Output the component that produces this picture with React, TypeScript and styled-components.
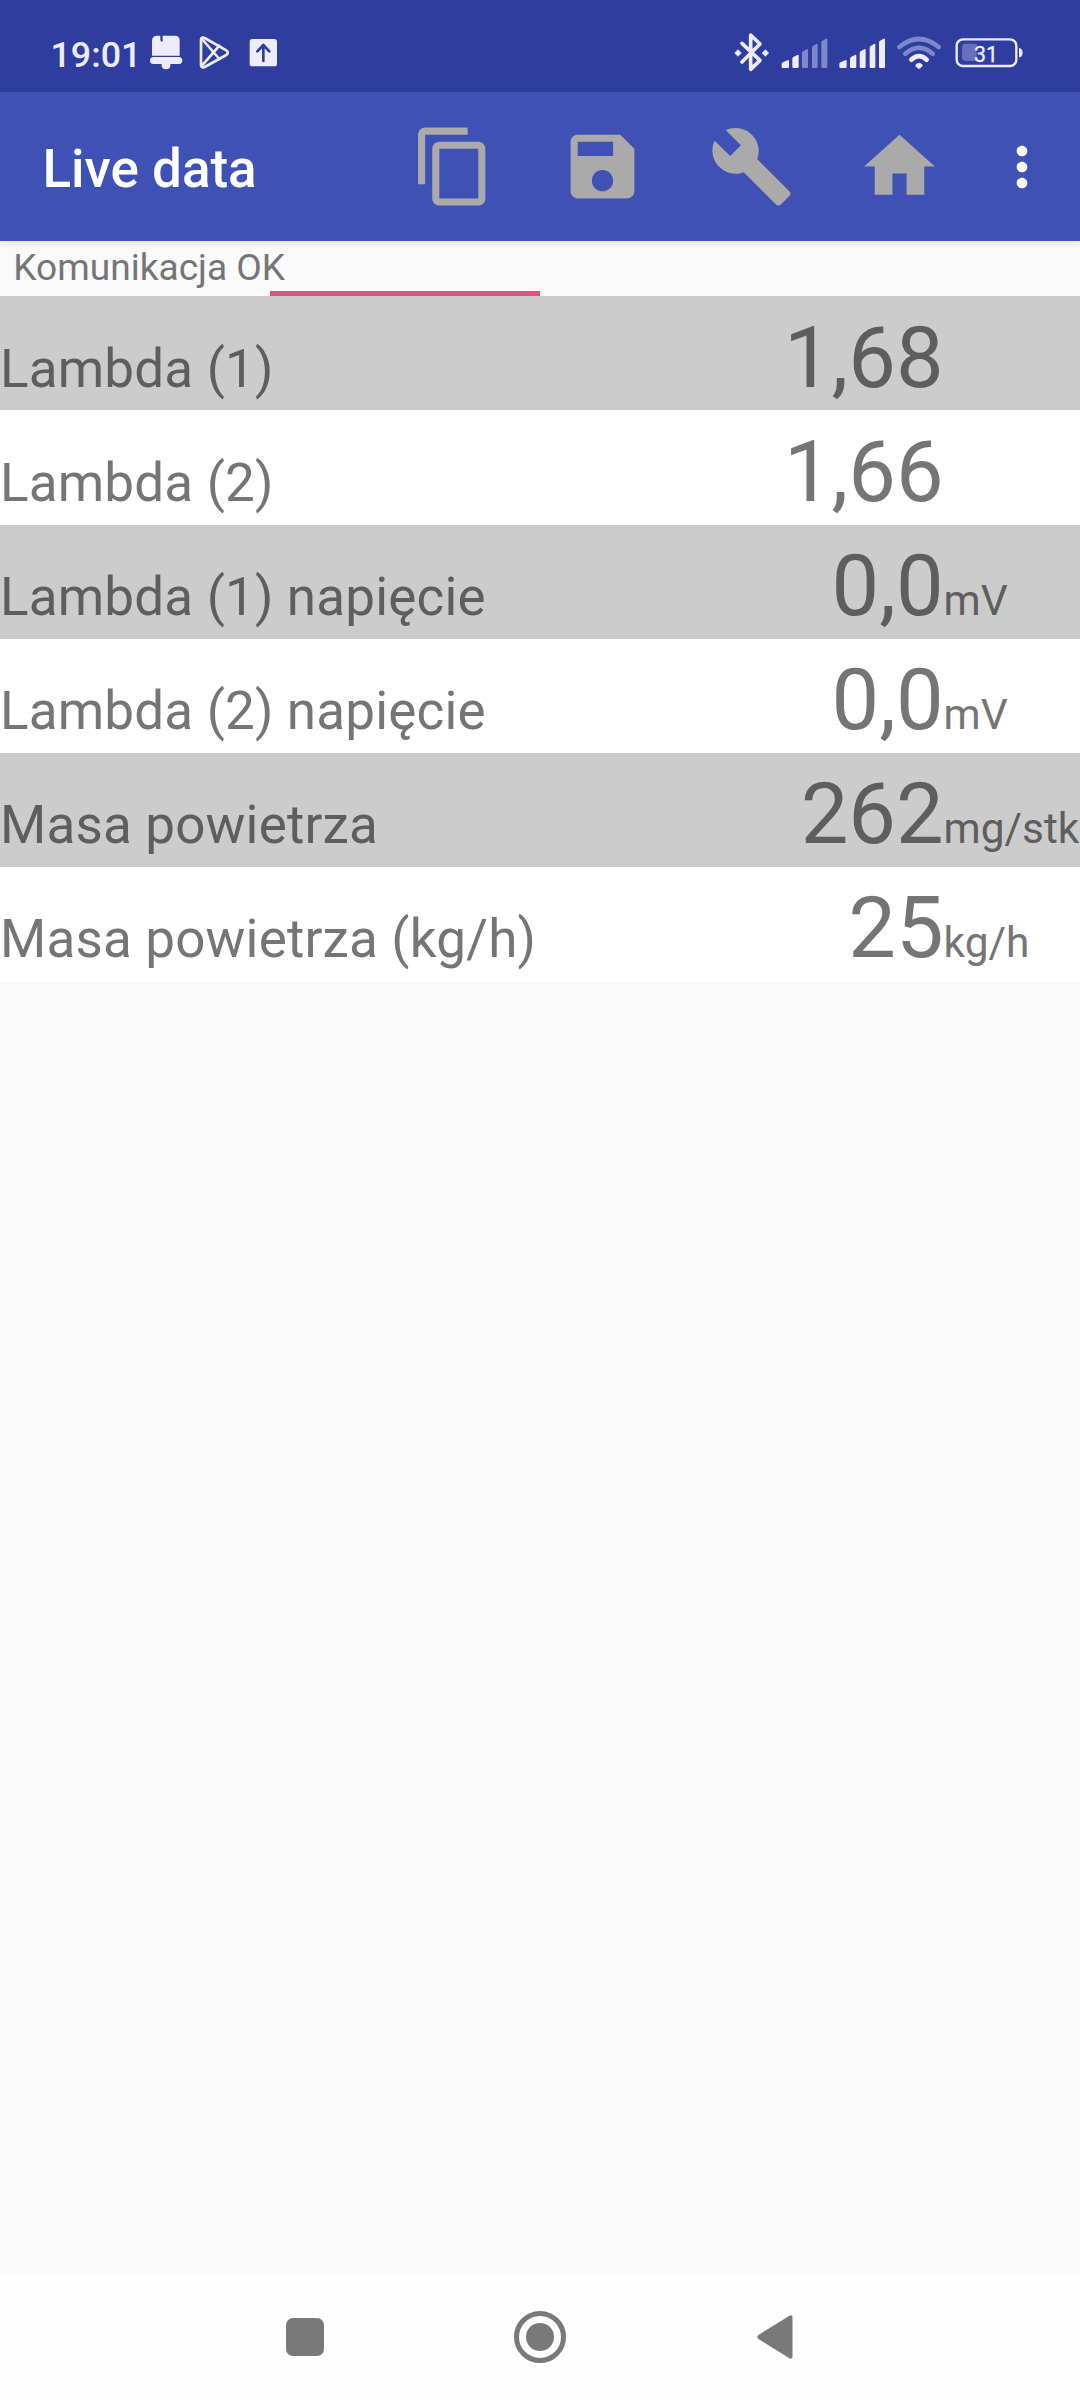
import React from "react";
import styled, { createGlobalStyle } from "styled-components";

const GlobalStyle = createGlobalStyle`
  *, *::before, *::after { box-sizing: border-box; }
  html, body { margin: 0; padding: 0; }
  body { background: #fafafa; font-family: Roboto, "Noto Sans", sans-serif; }
  svg { display: block; flex: none; }
`;

const Screen = styled.div`
  display: flex;
  flex-direction: column;
  width: 1080px;
  height: 2400px;
  overflow: hidden;
  background: #fafafa;
`;

const StatusBar = styled.header`
  display: flex;
  align-items: flex-start;
  justify-content: space-between;
  height: 92px;
  padding: 20px 57px 0 50px;
  background: #2f3d9e;
`;

const StatusGroup = styled.div`
  display: flex;
  align-items: flex-start;
  height: 70px;
`;

const Clock = styled.span`
  width: 100px;
  padding-left: 0.5px;
  font-size: 35.8px;
  font-weight: 500;
  line-height: 70px;
  color: #ececfb;
`;

const AppBar = styled.div`
  position: relative;
  z-index: 1;
  display: flex;
  align-items: center;
  height: 149px;
  padding: 0 11px 0 42.4px;
  background: #3f51b5;
  box-shadow: 0 2px 8px rgba(0, 0, 0, 0.12);
`;

const Title = styled.h1`
  flex: 1;
  margin: 0;
  padding-top: 4px;
  font-size: 53px;
  font-weight: 500;
  line-height: 62px;
  color: #fff;
`;

const ActionButton = styled.button<{ $width: number }>`
  display: flex;
  align-items: center;
  justify-content: center;
  width: ${(p) => p.$width}px;
  height: 149px;
  padding: 0;
  border: 0;
  background: none;
`;

const ConnectionStrip = styled.div`
  display: flex;
  flex-direction: column;
  height: 55.2px;
`;

const ConnectionText = styled.div`
  height: 50px;
  padding: 4px 0 0 13.3px;
  font-size: 37.1px;
  line-height: 46px;
  color: #757575;
`;

const Progress = styled.div`
  width: 270px;
  height: 5.2px;
  margin-left: 270px;
  background: #e64d83;
`;

const Table = styled.main`
  flex: 1;
`;

const Row = styled.div<{ $shaded: boolean }>`
  display: grid;
  grid-template-columns: 1fr 263px 136.4px;
  align-items: baseline;
  height: 114.16px;
  padding-top: 11.5px;
  white-space: nowrap;
  background: ${(p) => (p.$shaded ? "#cccccc" : "#ffffff")};
  color: ${(p) => (p.$shaded ? "#5e5e5e" : "#757575")};
`;

const Label = styled.span`
  font-size: 53px;
  line-height: 62px;
  letter-spacing: 0.17px;
`;

const Value = styled.span`
  font-size: 84.8px;
  line-height: 100px;
  text-align: right;
`;

const Unit = styled.span`
  font-size: 42.4px;
  line-height: 50px;
`;

const NavBar = styled.nav`
  display: flex;
  justify-content: center;
  height: 126px;
  background: #fefefe;
`;

const NavKey = styled.div`
  display: flex;
  align-items: center;
  justify-content: center;
  width: 235px;
`;

const paths = {
  copy: "M16 1H4c-1.1 0-2 .9-2 2v14h2V3h12V1zm3 4H8c-1.1 0-2 .9-2 2v14c0 1.1.9 2 2 2h11c1.1 0 2-.9 2-2V7c0-1.1-.9-2-2-2zm0 16H8V7h11v14z",
  save: "M17 3H5c-1.11 0-2 .9-2 2v14c0 1.1.89 2 2 2h14c1.1 0 2-.9 2-2V7l-4-4zm-5 16c-1.66 0-3-1.34-3-3s1.34-3 3-3 3 1.34 3 3-1.34 3-3 3zm3-10H5V5h10v4z",
  wrench:
    "M22.7 19l-9.1-9.1c.9-2.3.4-5-1.5-6.9-2-2-5-2.4-7.4-1.3L9 6 6 9 1.6 4.7C.4 7.1.9 10.1 2.9 12.1c1.9 1.9 4.6 2.4 6.9 1.5l9.1 9.1c.4.4 1 .4 1.4 0l2.3-2.3c.5-.4.5-1.1.1-1.4z",
  home: "M10 20v-6h4v6h5v-8h3L12 3 2 12h3v8z",
  more: "M12 8c1.1 0 2-.9 2-2s-.9-2-2-2-2 .9-2 2 .9 2 2 2zm0 2c-1.1 0-2 .9-2 2s.9 2 2 2 2-.9 2-2-.9-2-2-2zm0 6c-1.1 0-2 .9-2 2s.9 2 2 2 2-.9 2-2-.9-2-2-2z",
};

const Glyph = ({ d, size, color }: { d: string; size: number; color: string }) => (
  <svg width={size} height={size} viewBox="0 0 24 24" fill={color}>
    <path d={d} />
  </svg>
);

const LIGHT = "#ececfc";
const DIM = "#7e87c9";

const NotificationIcons = () => (
  <svg width="130" height="70" viewBox="360 0 390 210" fill={LIGHT}>
    <path d="M382 47h9v13q0 5 7 5V47h37q14 0 14 14v46h-83V63q0-16 16-16z" />
    <path d="M371 111h75q11 0 11 10.500t-11 10.500h-25v4q0 12-13 12t-13-12v-4h-24q-11 0-11-10.500t11-10.500z" />
    <g fill="none" stroke={LIGHT} strokeWidth="8" strokeLinejoin="round" strokeLinecap="round">
      <path d="M513 60q0-11 11-6l65 37q9 7 0 14l-65 36q-11 5-11-7z" />
      <path d="M516 57l52 60M516 137l52-60" />
    </g>
    <rect x="659" y="57" width="82" height="82" rx="8" />
    <path
      d="M700 123V76M682 94l18-19 18 19"
      fill="none"
      stroke="#2f3d9e"
      strokeWidth="8"
      strokeLinecap="round"
      strokeLinejoin="round"
    />
  </svg>
);

const signalBars = [
  { x: 0, top: 120, w: 22 },
  { x: 32, top: 104, w: 19 },
  { x: 61, top: 87, w: 18 },
  { x: 91, top: 71, w: 17 },
  { x: 119, top: 55, w: 18 },
];

const Signal = ({ x, level }: { x: number; level: number }) => (
  <g>
    {signalBars.map((b, i) => (
      <path
        key={b.x}
        fill={i < level ? LIGHT : DIM}
        d={`M${x + b.x} 140V${b.top + 12}q0-3 3-5l${b.w - 7}-6q4-2 4 2V140q0 4-4 4h-${b.w - 7}q-3 0-3-4z`}
      />
    ))}
  </g>
);

const SystemIcons = () => (
  <svg width="303" height="70" viewBox="0 0 909 210">
    <path
      d="M66 70l54 51-28 27V45l28 27-54 54"
      fill="none"
      stroke={LIGHT}
      strokeWidth="11"
      strokeLinecap="round"
      strokeLinejoin="round"
    />
    <path d="M54 89l10 10-10 10-10-10zM136 89l10 10-10 10-10-10z" fill={LIGHT} stroke={LIGHT} strokeWidth="2" strokeLinejoin="round" />
    <Signal x={185} level={2} />
    <Signal x={358} level={5} />
    <g fill="none" strokeWidth="14" strokeLinecap="round">
      <path d="M538 81Q597 33 656 81" stroke={DIM} />
      <path d="M556 101Q597 66 638 101" stroke={DIM} />
      <path d="M574 119Q597 98 620 119" stroke={LIGHT} />
    </g>
    <path d="M587 134q10-12 20 0 2 3 0 5l-8 7q-2 1-4 0l-8-7q-2-2 0-5z" fill={LIGHT} />
    <rect x="710" y="58" width="179" height="80" rx="19" fill="none" stroke={LIGHT} strokeWidth="7" />
    <path d="M737 71h33v52h-33q-11 0-11-11V82q0-11 11-11z" fill="#6670be" />
    <path d="M897 84q11 2 11 14t-11 14z" fill={LIGHT} />
    <text x="798" y="125" fontSize="64" textAnchor="middle" fill={LIGHT} stroke={LIGHT} strokeWidth="1">
      31
    </text>
  </svg>
);

const readings = [
  { label: "Lambda (1)", value: "1,68", unit: "" },
  { label: "Lambda (2)", value: "1,66", unit: "" },
  { label: "Lambda (1) napięcie", value: "0,0", unit: "mV" },
  { label: "Lambda (2) napięcie", value: "0,0", unit: "mV" },
  { label: "Masa powietrza", value: "262", unit: "mg/stk" },
  { label: "Masa powietrza (kg/h)", value: "25", unit: "kg/h" },
];

export default function App() {
  return (
    <>
      <GlobalStyle />
      <Screen>
        <StatusBar>
          <StatusGroup>
            <Clock>19:01</Clock>
            <NotificationIcons />
          </StatusGroup>
          <StatusGroup>
            <SystemIcons />
          </StatusGroup>
        </StatusBar>
        <AppBar>
          <Title>Live data</Title>
          {[paths.copy, paths.save, paths.wrench, paths.home].map((d) => (
            <ActionButton key={d} $width={148.6}>
              <Glyph d={d} size={85} color="#aaaaaa" />
            </ActionButton>
          ))}
          <ActionButton $width={95}>
            <Glyph d={paths.more} size={64} color="#ffffff" />
          </ActionButton>
        </AppBar>
        <ConnectionStrip>
          <ConnectionText>Komunikacja OK</ConnectionText>
          <Progress />
        </ConnectionStrip>
        <Table>
          {readings.map((r, i) => (
            <Row key={r.label} $shaded={i % 2 === 0}>
              <Label>{r.label}</Label>
              <Value>{r.value}</Value>
              <Unit>{r.unit}</Unit>
            </Row>
          ))}
        </Table>
        <NavBar>
          <NavKey>
            <svg width="38" height="38" viewBox="0 0 38 38" fill="#797979">
              <rect width="38" height="38" rx="7" />
            </svg>
          </NavKey>
          <NavKey>
            <svg width="52" height="52" viewBox="0 0 52 52" fill="#797979">
              <circle cx="26" cy="26" r="23.500" fill="none" stroke="#797979" strokeWidth="5" />
              <circle cx="26" cy="26" r="14" />
            </svg>
          </NavKey>
          <NavKey>
            <svg width="36" height="44" viewBox="0 0 36 44" fill="#797979">
              <path d="M32 1Q35.500-.8 35.500 2.500v39Q35.500 44.800 32 43L1.500 24Q-.8 22 1.500 20z" />
            </svg>
          </NavKey>
        </NavBar>
      </Screen>
    </>
  );
}
